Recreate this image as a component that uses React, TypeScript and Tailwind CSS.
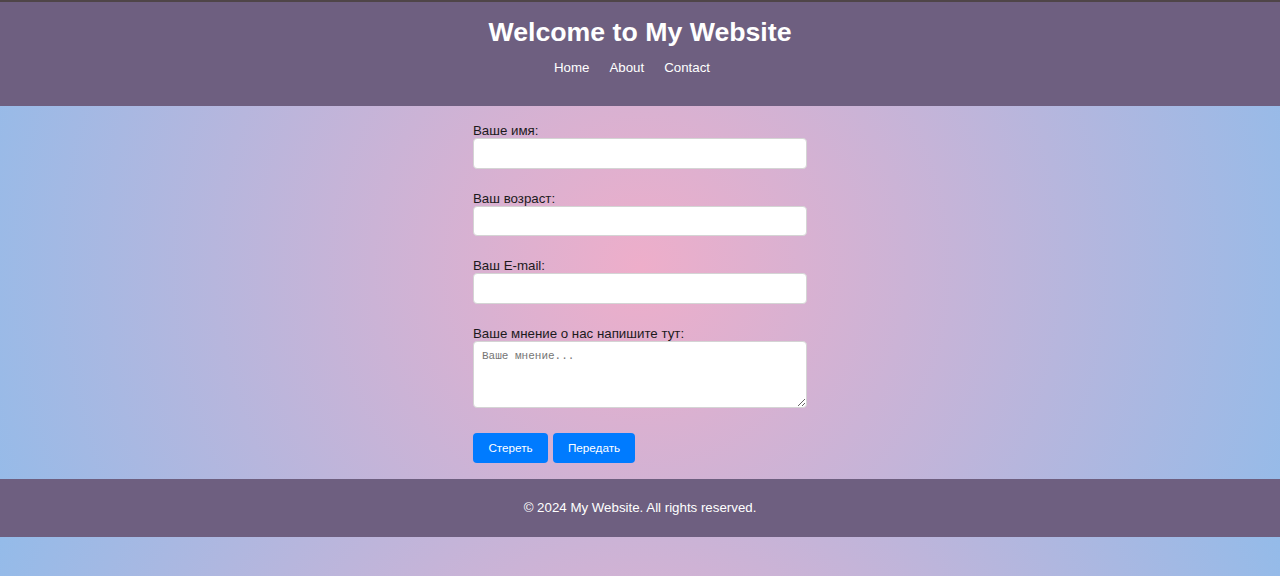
const font = { fontFamily: '"Liberation Sans", Arial, sans-serif' };

interface Field {
  id: string;
  label: string;
  type: string;
}

const fields: Field[] = [
  { id: "name", label: "Ваше имя:", type: "text" },
  { id: "age", label: "Ваш возраст:", type: "number" },
  { id: "email", label: "Ваш E-mail:", type: "email" },
];

export default function App() {
  return (
    <div
      className="h-screen w-full overflow-hidden bg-[radial-gradient(circle,#eeaeca_0%,#94bbe9_100%)] bg-[length:100%_537px] bg-repeat font-['Liberation_Sans',Arial,sans-serif]"
    >
      {/* Header */}
      <header className="h-[106px] border-t-2 border-[#4f4548] bg-[#6e5f80] pt-[15px] flex flex-col items-center text-white">
        <h1 className="text-[26.7px] leading-[31px] font-bold">Welcome to My Website</h1>
        <nav className="mt-[12px] pr-[16px] flex gap-[20px] text-[13.3px] leading-[15px]">
          <a href="#">Home</a>
          <a href="#">About</a>
          <a href="#">Contact</a>
        </nav>
      </header>

      {/* Form */}
      <form className="mx-auto w-[334px] pt-[17px] flex flex-col text-[13.3px] text-[#1c1a1c]">
        {fields.map((f, i) => (
          <div key={f.id} className={i === 0 ? "flex flex-col" : "mt-[22px] flex flex-col"}>
            <label htmlFor={f.id} className="leading-[15px]">
              {f.label}
            </label>
            <input
              id={f.id}
              type={f.type}
              className="h-[30.5px] w-full rounded-[4px] border border-[#d4d4d4] bg-white px-[8px] outline-none"
            />
          </div>
        ))}
        <div className="mt-[22px] flex flex-col">
          <label htmlFor="opinion" className="leading-[15px]">
            Ваше мнение о нас напишите тут:
          </label>
          <textarea
            id="opinion"
            placeholder="Ваше мнение..."
            className="h-[67px] w-full rounded-[4px] border border-[#d4d4d4] bg-white p-[8px] text-[11px] leading-[13px] font-['Liberation_Mono',monospace] placeholder:text-[#757575] outline-none"
          />
        </div>
        <div className="mt-[25px] flex gap-[5px]">
          <button type="reset" className="h-[30px] w-[75px] rounded-[4px] bg-[#007bff] text-[11.7px] text-white" style={font}>
            Стереть
          </button>
          <button type="submit" className="h-[30px] w-[82px] rounded-[4px] bg-[#007bff] text-[11.7px] text-white" style={font}>
            Передать
          </button>
        </div>
      </form>

      {/* Footer */}
      <footer className="mt-[16px] h-[58px] bg-[#6e5f80] flex items-center justify-center text-[13.3px] text-white">
        © 2024 My Website. All rights reserved.
      </footer>
    </div>
  );
}
